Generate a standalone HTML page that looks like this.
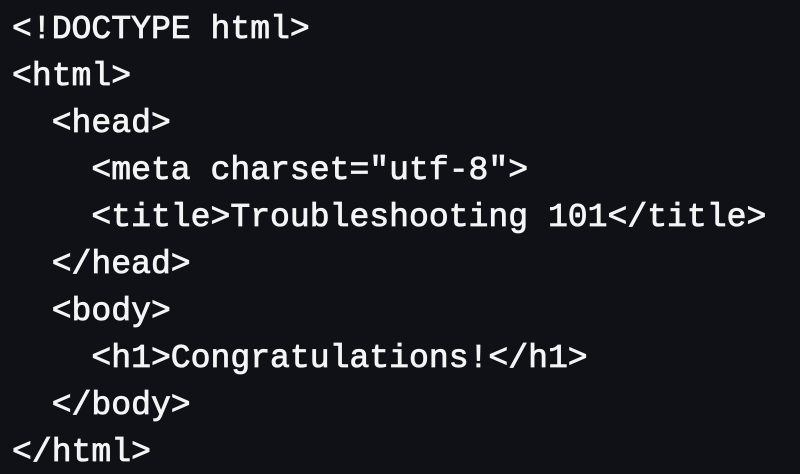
<!DOCTYPE html>
<html><head><meta charset="utf-8"><style>
html,body{margin:0;padding:0;background:#0f1117;width:800px;height:474px;overflow:hidden}
pre{margin:0;padding:6px 0 0 12px;font-family:"Liberation Mono",monospace;font-size:33.1px;line-height:47px;color:#f4f4f4;font-weight:normal;-webkit-text-stroke:0.8px #f4f4f4}
</style></head><body><pre>&lt;!DOCTYPE html&gt;
&lt;html&gt;
  &lt;head&gt;
    &lt;meta charset="utf-8"&gt;
    &lt;title&gt;Troubleshooting 101&lt;/title&gt;
  &lt;/head&gt;
  &lt;body&gt;
    &lt;h1&gt;Congratulations!&lt;/h1&gt;
  &lt;/body&gt;
&lt;/html&gt;</pre></body></html>
